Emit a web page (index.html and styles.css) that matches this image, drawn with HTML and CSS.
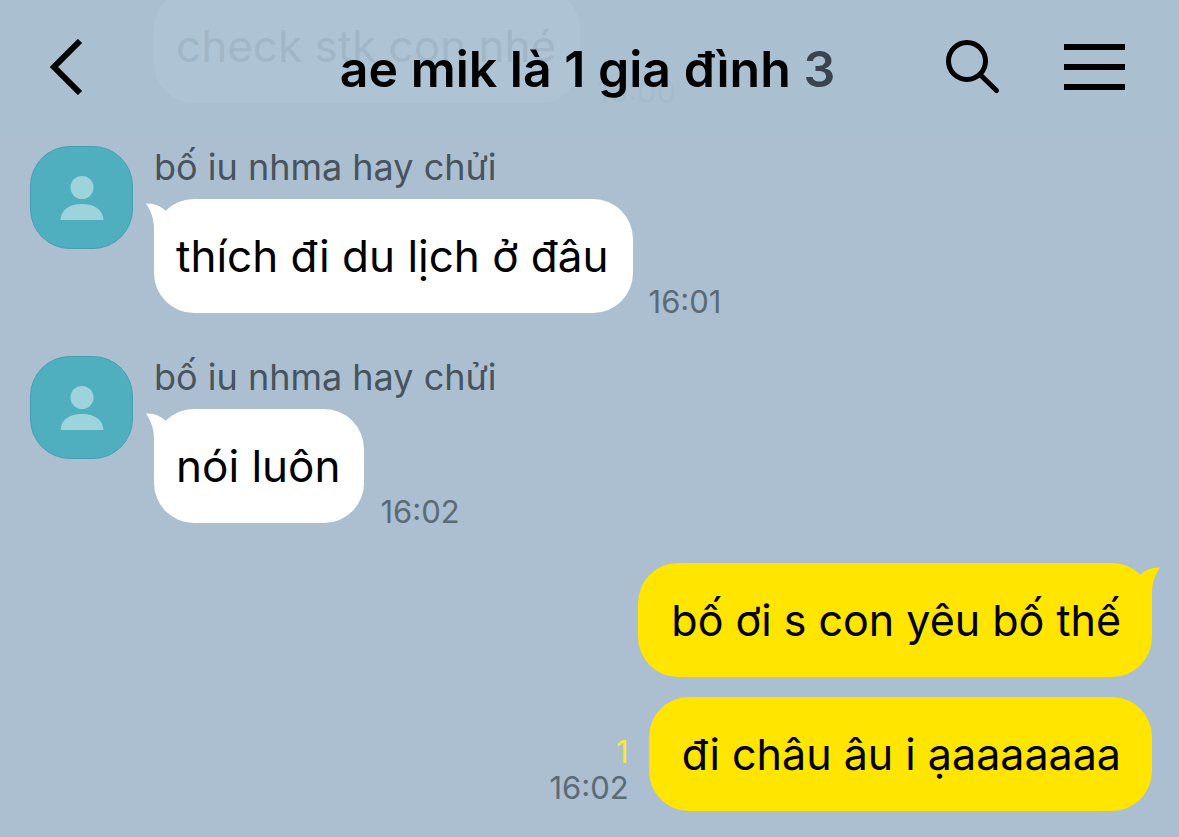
FILE: index.html
```html
<!DOCTYPE html>
<html lang="vi">
<head>
    <meta charset="UTF-8">
    <meta name="viewport" content="width=device-width, initial-scale=1.0">
    <title>ae mik là 1 gia đình</title>
    <link rel="stylesheet" href="styles.css">
</head>
<body>

    <!-- Header -->
    <header class="header">
        <button class="icon-btn" type="button" aria-label="Back">
            <svg width="34" height="56" viewBox="0 0 34 56">
                <path d="M30 2 L4 28 L30 54" fill="none" stroke="#000" stroke-width="6"/>
            </svg>
        </button>
        <h1 class="title">ae mik là 1 gia đình <span class="count">3</span></h1>
        <div class="actions">
            <button class="icon-btn" type="button" aria-label="Search">
                <svg width="54" height="54" viewBox="0 0 54 54" fill="none" stroke="#000" stroke-width="5" stroke-linecap="round">
                    <circle cx="21" cy="21" r="18.500"/>
                    <path d="M34.500 35 L50.500 50.500"/>
                </svg>
            </button>
            <button class="icon-btn" type="button" aria-label="Menu">
                <svg width="61" height="46" viewBox="0 0 61 46">
                    <path d="M0 3 H61 M0 23 H61 M0 43 H61" stroke="#000" stroke-width="6"/>
                </svg>
            </button>
        </div>
    </header>

    <!-- Messages -->
    <main class="chat">
        <div class="row continued">
            <p class="bubble">check stk con nhé</p>
            <time class="time">16:00</time>
        </div>

        <div class="message">
            <div class="avatar">
                <svg width="44" height="44" viewBox="0 0 44 44" fill="#9dd3da">
                    <circle cx="22" cy="11.500" r="11.500"/>
                    <path d="M0.500 44 C1 34 9 28 22 28 S43 34 43.500 44 Z"/>
                </svg>
            </div>
            <div class="content">
                <h2 class="name">bố iu nhma hay chửi</h2>
                <div class="row">
                    <p class="bubble">
                        <svg class="tail" width="22" height="40" viewBox="0 0 22 40" fill="#fff">
                            <path d="M0 0.500 C8 0 15 3 20 8 L22 40 H8 V26 C8 16 5 8 0 0.500 Z"/>
                        </svg>thích đi du lịch ở đâu</p>
                    <time class="time">16:01</time>
                </div>
            </div>
        </div>

        <div class="message">
            <div class="avatar">
                <svg width="44" height="44" viewBox="0 0 44 44" fill="#9dd3da">
                    <circle cx="22" cy="11.500" r="11.500"/>
                    <path d="M0.500 44 C1 34 9 28 22 28 S43 34 43.500 44 Z"/>
                </svg>
            </div>
            <div class="content">
                <h2 class="name">bố iu nhma hay chửi</h2>
                <div class="row">
                    <p class="bubble">
                        <svg class="tail" width="22" height="40" viewBox="0 0 22 40" fill="#fff">
                            <path d="M0 0.500 C8 0 15 3 20 8 L22 40 H8 V26 C8 16 5 8 0 0.500 Z"/>
                        </svg>nói luôn</p>
                    <time class="time">16:02</time>
                </div>
            </div>
        </div>

        <div class="mine">
            <div class="row">
                <p class="bubble">
                    <svg class="tail" width="22" height="40" viewBox="0 0 22 40" fill="#ffe500">
                        <path d="M22 0.500 C14 0 7 3 2 8 L0 40 H14 V26 C14 16 17 8 22 0.500 Z"/>
                    </svg>bố ơi s con yêu bố thế</p>
            </div>
            <div class="row">
                <div class="status">
                    <span class="unread">1</span>
                    <time class="time">16:02</time>
                </div>
                <p class="bubble">đi châu âu i ạaaaaaaa</p>
            </div>
        </div>
    </main>

</body>
</html>
```

FILE: styles.css
```css
* {
    box-sizing: border-box;
}
body {
    margin: 0;
    background-color: #abbfd1;
    color: #000;
    font-family: Inter, "Noto Sans", sans-serif;
}
h1, h2, p {
    margin: 0;
}

.header {
    position: fixed;
    top: 0;
    left: 0;
    right: 0;
    z-index: 2;
    display: grid;
    grid-template-columns: 1fr auto 1fr;
    align-items: center;
    height: 134px;
    padding: 0 54px 0 50px;
    background-color: rgba(170, 192, 209, 0.95);
}
.title {
    padding-top: 4px;
    font-size: 50px;
    font-weight: 600;
    line-height: 60px;
    white-space: nowrap;
}
.count {
    color: #3a444e;
}
.icon-btn {
    display: block;
    justify-self: start;
    padding: 0;
    border: none;
    background: none;
    cursor: pointer;
}
.icon-btn svg {
    display: block;
}
.actions {
    display: flex;
    align-items: center;
    justify-content: flex-end;
    gap: 64px;
}

.chat {
    display: flex;
    flex-direction: column;
    gap: 43px;
    margin-top: -11px;
    padding: 0 27px 26px 30px;
}
.message {
    display: flex;
    gap: 21px;
}
.avatar {
    display: flex;
    flex: none;
    align-items: center;
    justify-content: center;
    width: 103px;
    height: 103px;
    border: 1px solid #479fae;
    border-radius: 40px;
    background-color: #4fafbe;
}
.name {
    margin-bottom: 11px;
    color: #47535f;
    font-size: 36px;
    font-weight: 400;
    line-height: 42px;
}
.row {
    display: flex;
    align-items: flex-end;
    gap: 16px;
}
.continued {
    margin-left: 124px;
}
.bubble {
    position: relative;
    padding: 28px 24px 28px 22px;
    border-radius: 40px;
    background-color: #fff;
    font-size: 44px;
    line-height: 58px;
}
.tail {
    position: absolute;
    top: 4px;
    left: -8px;
}
.time {
    color: #5b6a77;
    font-size: 31px;
    line-height: 22px;
}

.mine {
    display: flex;
    flex-direction: column;
    align-items: flex-end;
    gap: 20px;
    margin-top: -3px;
}
.mine .row {
    gap: 20px;
}
.mine .bubble {
    padding: 28px 31px 28px 33px;
    background-color: #ffe500;
    font-size: 43px;
}
.mine .tail {
    left: auto;
    right: -8px;
}
.status {
    display: flex;
    flex-direction: column;
    align-items: flex-end;
    gap: 14px;
    padding-bottom: 12px;
}
.unread {
    color: #f8e838;
    font-size: 31px;
    line-height: 22px;
}
```
